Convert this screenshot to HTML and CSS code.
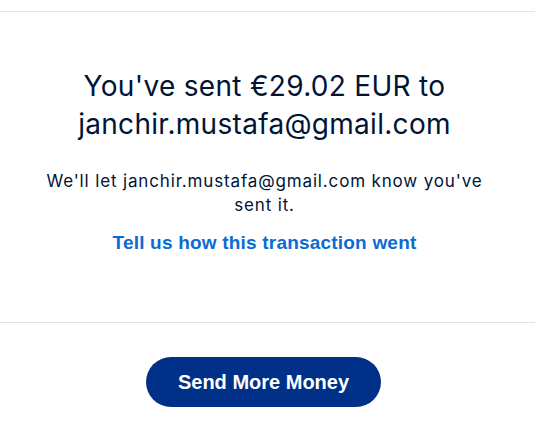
FILE: index.html
```html
<!DOCTYPE html>
<html>
<head>
<meta charset="utf-8">
<link rel="stylesheet" href="styles.css">
</head>
<body>
<div class="page">
  <div class="top"></div>
  <section class="content">
    <h1 class="title">You've sent €29.02 EUR to janchir.mustafa@gmail.com</h1>
    <p class="note">We'll let janchir.mustafa@gmail.com know you've sent it.</p>
    <a class="link" href="#">Tell us how this transaction went</a>
  </section>
  <div class="actions">
    <button class="btn">Send More Money</button>
  </div>
</div>
</body>
</html>
```

FILE: styles.css
```css
* { box-sizing: border-box; }
html, body { margin: 0; padding: 0; background: #fff; }
body {
  font-family: Inter, "Noto Sans", "Liberation Sans", sans-serif;
  color: #001435;
}
.page { width: 535px; }
.top {
  height: 12px;
  border-bottom: 1px solid #e3e3e3;
}
.content {
  display: flex;
  flex-direction: column;
  align-items: center;
  text-align: center;
  padding: 55px 33px 67px 27px;
  border-bottom: 1px solid #e3e3e3;
}
.title {
  margin: 0;
  font-size: 28px;
  font-weight: 400;
  line-height: 38px;
  letter-spacing: 0.3px;
  width: 440px;
}
.note {
  margin: 26px 0 0;
  font-size: 17px;
  line-height: 24px;
  letter-spacing: 0.85px;
  width: 460px;
}
.link {
  margin-top: 14px;
  font-family: "Liberation Sans", Arial, sans-serif;
  font-size: 19px;
  line-height: 24px;
  font-weight: 700;
  letter-spacing: 0.2px;
  color: #0a6bd1;
  text-decoration: none;
}
.actions {
  display: flex;
  justify-content: center;
  padding: 34px 8px 0 0;
}
.btn {
  width: 235px;
  height: 50px;
  border: none;
  border-radius: 25px;
  background: #003087;
  color: #fff;
  font-family: "Liberation Sans", Arial, sans-serif;
  font-size: 20px;
  font-weight: 700;
}
```
